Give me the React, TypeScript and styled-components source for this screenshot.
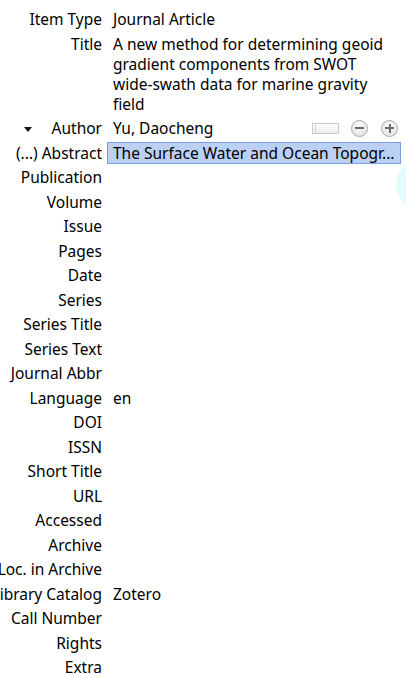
import React from "react";
import styled, { createGlobalStyle } from "styled-components";

const Global = createGlobalStyle`
  html, body { margin: 0; padding: 0; background: #ffffff; overflow: hidden; }
  body { font-family: "Noto Sans", "Open Sans", sans-serif; font-size: 15.5px; color: #000; }
`;

const Page = styled.div`
  position: relative;
  width: 406px;
  height: 678px;
  overflow: hidden;
  background: #fff;
`;

const Grid = styled.div`
  display: grid;
  grid-template-columns: 102px 1fr;
  column-gap: 5px;
  padding: 6.75px 5px 0 0;
`;

const Label = styled.div`
  display: flex;
  justify-content: flex-end;
  align-items: flex-start;
  gap: 20px;
  white-space: nowrap;
  line-height: 20px;
  padding-top: 2.25px;
  min-width: 0;
`;

const Value = styled.div<{ $selected?: boolean }>`
  margin: 1.25px 0;
  border: 1px solid ${(p) => (p.$selected ? "#7b9fdf" : "transparent")};
  background: ${(p) => (p.$selected ? "#bcd0f4" : "transparent")};
  padding: 0 5px;
  line-height: 20px;
  min-height: 20px;
  min-width: 0;
  white-space: ${(p) => (p.$selected ? "nowrap" : "normal")};
  overflow: hidden;
  text-overflow: ellipsis;
`;

const NoBreak = styled.span`
  white-space: nowrap;
`;

const CreatorValue = styled(Value)`
  display: flex;
  align-items: center;
  overflow: visible;
`;

const Name = styled.span`
  flex: 1;
`;

const Twisty = styled.span`
  width: 0;
  height: 0;
  margin-top: 9px;
  border-left: 4px solid transparent;
  border-right: 4px solid transparent;
  border-top: 5px solid #111;
`;

const ModeSwitch = styled.span`
  position: relative;
  width: 25px;
  height: 9px;
  border: 1px solid #c9c9c9;
  background: linear-gradient(#fbfbfb, #eeeeee);
  margin-right: 12px;
  &::before {
    content: "";
    position: absolute;
    left: 2px;
    top: 1px;
    width: 1px;
    height: 7px;
    background: #cfcfcf;
  }
`;

const RoundButton = styled.span<{ $plus?: boolean }>`
  position: relative;
  box-sizing: border-box;
  width: 17px;
  height: 17px;
  border-radius: 50%;
  border: 1px solid #a9a9a9;
  background: radial-gradient(circle at 50% 35%, #fdfdfd, #dedede);
  margin-left: ${(p) => (p.$plus ? "13px" : "0")};
  margin-right: ${(p) => (p.$plus ? "-3px" : "0")};
  &::before {
    content: "";
    position: absolute;
    left: 3px;
    top: 6.5px;
    width: 9px;
    height: 2px;
    background: #6a6a6a;
  }
  &::after {
    content: "";
    display: ${(p) => (p.$plus ? "block" : "none")};
    position: absolute;
    left: 6.5px;
    top: 3px;
    width: 2px;
    height: 9px;
    background: #6a6a6a;
  }
`;

const Bubble = styled.div`
  position: absolute;
  left: 396px;
  top: 160px;
  width: 50px;
  height: 50px;
  border-radius: 50%;
  background: #e3fcfc;
`;

const fields: [string, string][] = [
  ["Publication", ""],
  ["Volume", ""],
  ["Issue", ""],
  ["Pages", ""],
  ["Date", ""],
  ["Series", ""],
  ["Series Title", ""],
  ["Series Text", ""],
  ["Journal Abbr", ""],
  ["Language", "en"],
  ["DOI", ""],
  ["ISSN", ""],
  ["Short Title", ""],
  ["URL", ""],
  ["Accessed", ""],
  ["Archive", ""],
  ["Loc. in Archive", ""],
  ["Library Catalog", "Zotero"],
  ["Call Number", ""],
  ["Rights", ""],
  ["Extra", ""],
];

export default function App() {
  return (
    <Page>
      <Global />
      <Grid>
        <Label>Item Type</Label>
        <Value>Journal Article</Value>

        <Label>Title</Label>
        <Value>
          A new method for determining geoid gradient components from SWOT{" "}
          <NoBreak>wide-swath</NoBreak> data for marine gravity field
        </Value>

        <Label>
          <Twisty />
          Author
        </Label>
        <CreatorValue>
          <Name>Yu, Daocheng</Name>
          <ModeSwitch />
          <RoundButton />
          <RoundButton $plus />
        </CreatorValue>

        <Label>(...) Abstract</Label>
        <Value $selected>The Surface Water and Ocean Topogr...</Value>

        {fields.map(([k, v]) => (
          <React.Fragment key={k}>
            <Label>{k}</Label>
            <Value>{v}</Value>
          </React.Fragment>
        ))}
      </Grid>
      <Bubble />
    </Page>
  );
}
